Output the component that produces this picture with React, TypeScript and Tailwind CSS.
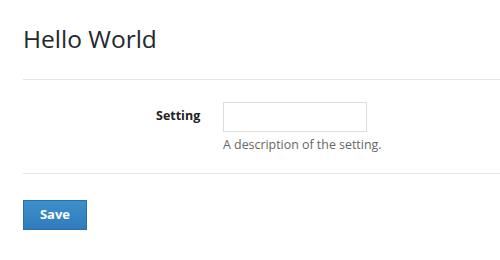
import React, { useState } from "react";

const App: React.FC = () => {
  const [value, setValue] = useState("");

  return (
    <div className="min-h-[260px] bg-white pl-[23px] pt-[22px] text-[#444] [font-family:'Open_Sans',sans-serif]">
      <h1 className="text-[24.5px] leading-[34px] font-normal text-[#23282d]">Hello World</h1>

      <div className="mt-[23px] border-t border-[#e5e5e5]">
        <div className="flex pt-[22px] pb-[19px]">
          <label className="w-[200px] pl-[133px] pt-[5px] text-[12.5px] font-bold text-[#222]">Setting</label>
          <div className="flex flex-col">
            <input
              value={value}
              onChange={(e) => setValue(e.target.value)}
              className="h-[30px] w-[144px] border border-[#ddd] bg-white px-2 text-[13px] outline-none"
            />
            <p className="mt-[3px] text-[12.4px] leading-[19px] text-[#666]">A description of the setting.</p>
          </div>
        </div>
      </div>

      <div className="border-t border-[#e5e5e5] pt-[26px]">
        <button className="h-[30px] w-[64px] border border-[#2a6fa8] bg-gradient-to-b from-[#3d8fcc] to-[#2f7cbc] text-[13px] font-bold text-white">
          Save
        </button>
      </div>
    </div>
  );
};

export default App;
